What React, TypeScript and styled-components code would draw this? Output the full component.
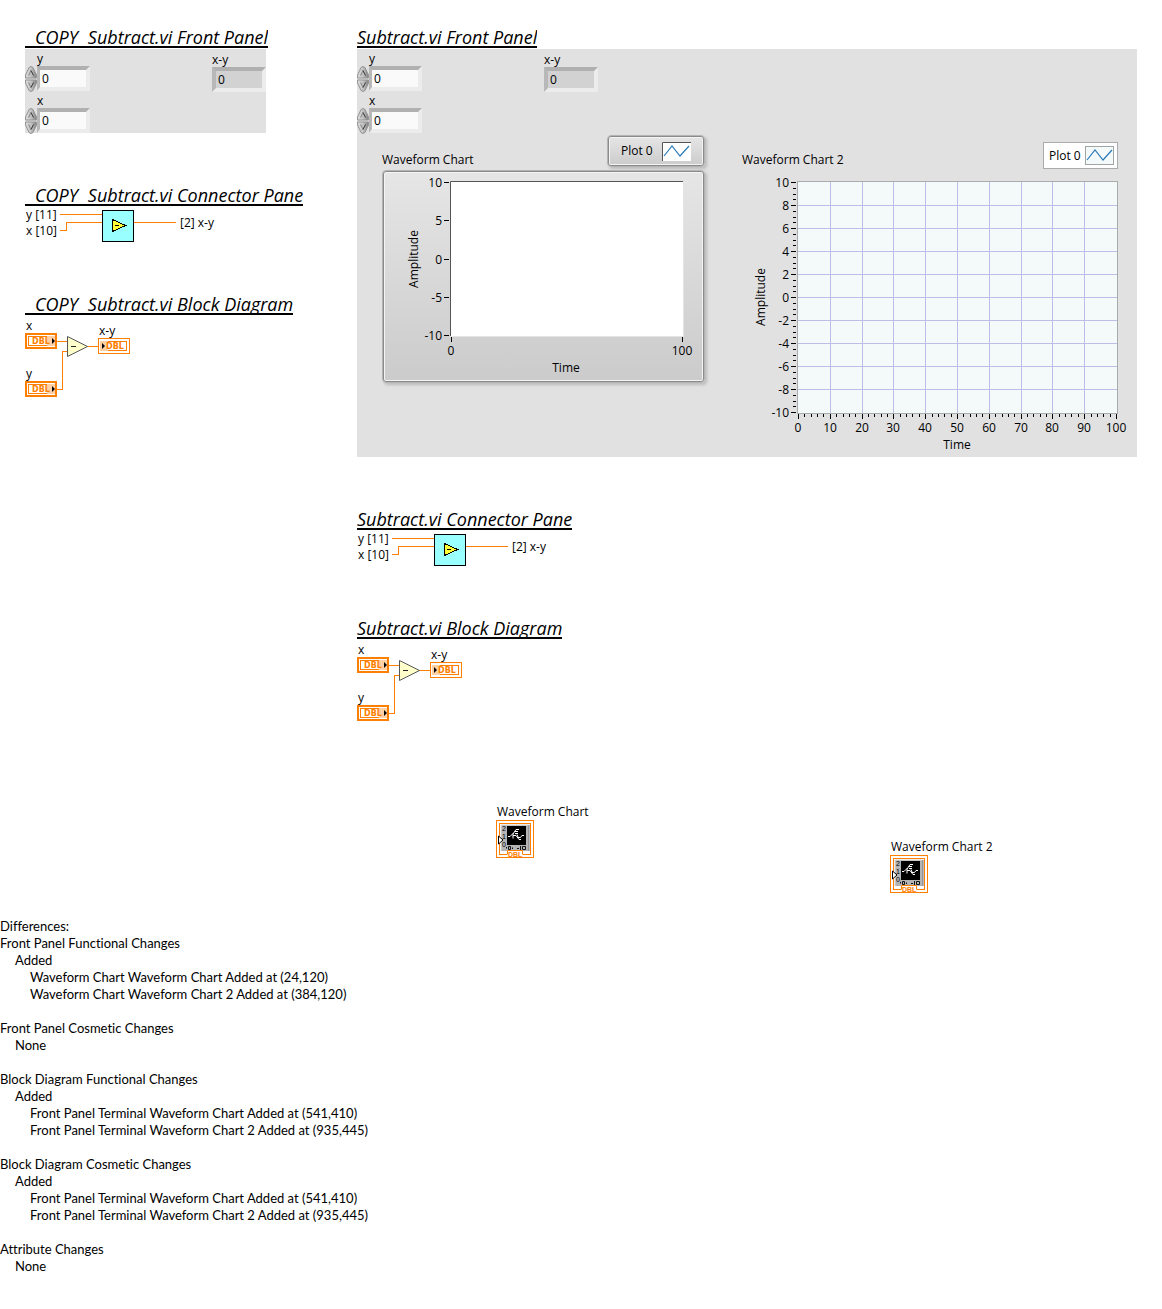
import React, { useId, useState } from "react";
import styled, { createGlobalStyle, css } from "styled-components";

const ORANGE = "#ff8000";
const UI_FONT = '"Open Sans", "Noto Sans", sans-serif';
const REPORT_FONT = 'Lato, "Open Sans", sans-serif';

const GlobalStyle = createGlobalStyle`
  *, *::before, *::after { box-sizing: border-box; }
  body {
    margin: 0;
    background: #fff;
    color: #000;
    font: 12px/16px ${UI_FONT};
  }
  svg { display: block; overflow: visible; }
  svg text { font-family: ${UI_FONT}; font-size: 12px; }
`;

const Page = styled.main`
  padding: 27px 0 34px;
`;

const Comparison = styled.div`
  display: grid;
  grid-template-columns: 332px minmax(780px, 1fr);
  padding: 0 25px;
`;

const Column = styled.div`
  display: flex;
  flex-direction: column;
  align-items: stretch;
  gap: 52px;
`;

const Section = styled.section`
  display: flex;
  flex-direction: column;
  align-items: flex-start;
`;

const Heading = styled.h2<{ $copy?: boolean }>`
  display: flex;
  gap: 10px;
  height: 21px;
  margin: 0 0 1px;
  padding-left: ${(p) => (p.$copy ? 10 : 0)}px;
  border-bottom: 2px solid #000;
  overflow: hidden;
  white-space: nowrap;
  font: italic 400 18px/21px ${UI_FONT};
`;

const FrontPanel = styled.div<{ $wide?: boolean }>`
  background: #e1e1e1;
  ${(p) => (p.$wide ? "align-self: stretch;" : "width: 241px;")}
`;

const Controls = styled.div`
  display: grid;
  grid-template-columns: 187px 54px;
`;

const Field = styled.div<{ $indicator?: boolean }>`
  padding-top: ${(p) => (p.$indicator ? 1 : 0)}px;
`;

const FieldLabel = styled.label<{ $inset?: boolean }>`
  display: block;
  height: 17px;
  padding-left: ${(p) => (p.$inset ? 12 : 0)}px;
  line-height: 20px;
`;

const FieldBody = styled.div`
  display: flex;
  height: 25px;
`;

const Spinner = styled.div`
  display: flex;
  flex-direction: column;
  width: 12px;
`;

const SpinButton = styled.button`
  width: 12px;
  height: 13px;
  padding: 0;
  border: 0;
  background: none;
`;

const NumberBox = styled.input<{ $indicator?: boolean }>`
  width: ${(p) => (p.$indicator ? 54 : 53)}px;
  height: 25px;
  padding: 0 2px;
  border: 4px solid;
  border-color: #b0b0b0 #ececec #ececec #b8b8b8;
  border-left-width: ${(p) => (p.$indicator ? 4 : 3)}px;
  border-radius: 0;
  outline: 0;
  background: ${(p) => (p.$indicator ? "#d2d2d2" : "#fafafa")};
  font: 12px/16px ${UI_FONT};
  color: #000;
`;

const Charts = styled.div`
  display: flex;
  gap: 37px;
  padding-left: 25px;
  height: 324px;
`;

const Chart = styled.figure<{ $width: number }>`
  width: ${(p) => p.$width}px;
  margin: 0;
`;

const ChartHeader = styled.figcaption<{ $inset?: boolean }>`
  display: flex;
  justify-content: space-between;
  align-items: flex-end;
  height: 37px;
  padding: 0 ${(p) => (p.$inset ? 10 : 0)}px 1px 0;
`;

const ChartTitle = styled.span`
  padding-bottom: 1px;
`;

const bevel = css`
  border: 1px solid #b4b4b4;
  border-radius: 4px;
  background: linear-gradient(#e6e6e6, #cbcbcb);
  box-shadow: inset 0 0 0 1px #8a8a8a, inset 0 0 0 2px #f4f4f4, 2px 2px 3px #bcbcbc;
`;

const Legend = styled.div<{ $classic?: boolean }>`
  display: flex;
  align-items: center;
  justify-content: space-between;
  ${(p) =>
    p.$classic
      ? css`
          width: 98px;
          height: 32px;
          margin-bottom: 2px;
          padding: 0 13px;
          ${bevel}
        `
      : css`
          width: 75px;
          height: 27px;
          padding: 0 3px 0 5px;
          border: 1px solid #a8acac;
          background: #fff;
        `}
`;

const Bezel = styled.div`
  height: 213px;
  padding: 1px;
  ${bevel}
`;

const Pane = styled.div`
  display: flex;
  align-items: flex-start;
  gap: 3px;
  height: 35px;
`;

const PaneInputs = styled.div`
  width: 32px;
  padding-left: 1px;
  white-space: nowrap;
`;

const PaneOutput = styled.div`
  padding: 8px 0 0 1px;
`;

const Canvas = styled.div<{ $tall?: boolean }>`
  position: relative;
  align-self: stretch;
  height: ${(p) => (p.$tall ? 278 : 84)}px;
`;

const Terminal = styled.div<{ $x: number; $y: number }>`
  position: absolute;
  left: ${(p) => p.$x}px;
  top: ${(p) => p.$y}px;
  white-space: nowrap;
`;

const TerminalName = styled.div`
  padding-left: 1px;
`;

const Report = styled.section`
  font: 13px/17px ${REPORT_FONT};
  font-variant-ligatures: none;
`;

const ReportLine = styled.p<{ $level?: number }>`
  margin: 0;
  padding-left: ${(p) => (p.$level ?? 0) * 15}px;
`;

const ReportGroup = styled.div`
  & + & {
    margin-top: 17px;
  }
`;

const DblText = styled.text`
  && {
    font: 800 8px "DejaVu Sans", sans-serif;
    fill: ${ORANGE};
  }
`;

const SmallDblText = styled.text`
  && {
    font: 700 7px "Liberation Sans", sans-serif;
    fill: ${ORANGE};
  }
`;

const DialText = styled.text`
  && {
    font: 400 7px "Liberation Sans", sans-serif;
    fill: #000;
  }
`;

function SpinIcon({ down }: { down?: boolean }) {
  const fill = useId();
  return (
    <svg width="12" height="13" viewBox="0 0 12 13">
      <defs>
        <linearGradient id={fill}>
          <stop offset="0" stopColor="#dcdcdc" />
          <stop offset="0.5" stopColor="#c4c4c4" />
          <stop offset="1" stopColor="#808080" />
        </linearGradient>
      </defs>
      <g transform={down ? "matrix(1 0 0 -1 0 13)" : undefined}>
        <path d="M0.5 12V9L4 1.5Q6 -0.5 8 1.5L11.5 9V12Z" fill={`url(#${fill})`} stroke="#959595" />
        <path d="M3.5 9.5L6 4.5L8.5 9.5" fill="#bdbdbd" stroke="#8a8a8a" />
        <path d="M6 4.5L8.5 9.5" stroke="#444" />
      </g>
    </svg>
  );
}

function NumericControl({ name }: { name: string }) {
  const id = useId();
  const [value, setValue] = useState("0");
  const step = (by: number) => setValue(String((Number(value) || 0) + by));
  return (
    <Field>
      <FieldLabel htmlFor={id} $inset>
        {name}
      </FieldLabel>
      <FieldBody>
        <Spinner>
          <SpinButton type="button" aria-label={`Increase ${name}`} onClick={() => step(1)}>
            <SpinIcon />
          </SpinButton>
          <SpinButton type="button" aria-label={`Decrease ${name}`} onClick={() => step(-1)}>
            <SpinIcon down />
          </SpinButton>
        </Spinner>
        <NumberBox id={id} value={value} onChange={(e) => setValue(e.target.value)} />
      </FieldBody>
    </Field>
  );
}

function NumericIndicator({ name }: { name: string }) {
  const id = useId();
  return (
    <Field $indicator>
      <FieldLabel htmlFor={id}>{name}</FieldLabel>
      <NumberBox id={id} value="0" readOnly $indicator />
    </Field>
  );
}

function PanelControls() {
  return (
    <Controls>
      <div>
        <NumericControl name="y" />
        <NumericControl name="x" />
      </div>
      <NumericIndicator name="x-y" />
    </Controls>
  );
}

function PlotSample({ classic }: { classic?: boolean }) {
  return (
    <svg width="29" height="19" viewBox="0 0 29 19">
      <rect
        x="0.5"
        y="0.5"
        width="28"
        height="18"
        fill={classic ? "#fff" : "#f4f9fa"}
        stroke={classic ? "#fff" : "#a0a4a4"}
      />
      {classic && <path d="M0.5 19V0.5H29" fill="none" stroke="#555" />}
      <path d="M2 14L10 4L18 14L27 4" fill="none" stroke="#2a7ab8" strokeWidth="1.2" />
    </svg>
  );
}

interface AxesProps {
  left: number;
  top: number;
  width: number;
  height: number;
  yTicks: number[];
  xTicks: number[];
  yMinor?: number;
  xMinor?: number;
}

/* Tick marks and scale numbers around the plot rectangle. */
function Axes({ left, top, width, height, yTicks, xTicks, yMinor = 0, xMinor = 0 }: AxesProps) {
  const yAt = (i: number) => top + 1 + Math.round((i * (height - 2)) / (yTicks.length - 1));
  const xAt = (i: number) => left + 1 + Math.round((i * (width - 3)) / (xTicks.length - 1));
  const yMinors = Array.from({ length: (yTicks.length - 1) * (yMinor + 1) }, (_, i) => i / (yMinor + 1));
  const xMinors = Array.from({ length: (xTicks.length - 1) * (xMinor + 1) }, (_, i) => i / (xMinor + 1));
  return (
    <g>
      {yMinor > 0 && yMinors.map((i) => <rect key={i} x={left - 4} y={yAt(i)} width="3" height="1" />)}
      {xMinor > 0 && xMinors.map((i) => <rect key={i} x={xAt(i)} y={top + height + 1} width="1" height="3" />)}
      {yTicks.map((t, i) => (
        <g key={t}>
          <rect x={left - 6} y={yAt(i)} width="5" height="1" />
          <text x={left - 8} y={yAt(i) + 5} textAnchor="end">
            {t}
          </text>
        </g>
      ))}
      {xTicks.map((t, i) => (
        <g key={t}>
          <rect x={xAt(i)} y={top + height + 1} width="1" height="5" />
          <text x={xAt(i)} y={top + height + 19} textAnchor="middle">
            {t}
          </text>
        </g>
      ))}
    </g>
  );
}

function ClassicPlot() {
  return (
    <svg width="319" height="209" viewBox="0 0 319 209" role="img" aria-label="Waveform Chart">
      <rect x="66" y="9" width="234" height="156" fill="#e4e4e4" />
      <rect x="66" y="9" width="233" height="155" fill="#fff" />
      <path d="M66.5 164V9.5H299" fill="none" stroke="#555" />
      <Axes left={66} top={9} width={234} height={155} yTicks={[10, 5, 0, -5, -10]} xTicks={[0, 100]} />
      <text x="182" y="200" textAnchor="middle">
        Time
      </text>
      <text transform="translate(34 87) rotate(-90)" textAnchor="middle">
        Amplitude
      </text>
    </svg>
  );
}

function GridPlot() {
  const rows = Array.from({ length: 9 }, (_, i) => 35 + i * 23);
  const cols = Array.from({ length: 9 }, (_, i) => 56 + Math.round((i + 1) * 31.8));
  return (
    <svg width="386" height="287" viewBox="0 0 386 287" role="img" aria-label="Waveform Chart 2">
      <rect x="55.5" y="11.5" width="320" height="232" fill="#f4f9fa" stroke="#a8acac" />
      {rows.map((y) => (
        <rect key={y} x="56" y={y} width="319" height="1" fill="#bdbde8" />
      ))}
      {cols.map((x) => (
        <rect key={x} x={x} y="12" width="1" height="231" fill="#bdbde8" />
      ))}
      <Axes
        left={55}
        top={11}
        width={321}
        height={232}
        yTicks={[10, 8, 6, 4, 2, 0, -2, -4, -6, -8, -10]}
        xTicks={[0, 10, 20, 30, 40, 50, 60, 70, 80, 90, 100]}
        yMinor={3}
        xMinor={4}
      />
      <text x="215" y="279" textAnchor="middle">
        Time
      </text>
      <text transform="translate(23 127) rotate(-90)" textAnchor="middle">
        Amplitude
      </text>
    </svg>
  );
}

function ConnectorPane() {
  return (
    <Pane>
      <PaneInputs>
        <div>y [11]</div>
        <div>x [10]</div>
      </PaneInputs>
      <svg width="116" height="35" viewBox="0 0 116 35" shapeRendering="crispEdges">
        <path d="M0 7.5H42M0 23.5H6.5V15.5H42M74 15.5H116" fill="none" stroke={ORANGE} />
        <rect x="42.5" y="3.5" width="31" height="31" fill="#99ffff" stroke="#000" />
        <path d="M52.5 12.5V24.5L65.5 18.5Z" fill="#ffff33" stroke="#000" />
        <path d="M55 18.5H59" stroke="#000" />
      </svg>
      <PaneOutput>[2] x-y</PaneOutput>
    </Pane>
  );
}

function DblControl({ y }: { y: number }) {
  return (
    <g transform={`translate(0 ${y})`}>
      <rect x="1" y="1" width="30" height="14" fill="#fff" stroke={ORANGE} strokeWidth="2" />
      <rect x="3.5" y="3.5" width="25" height="9" fill="#fff" stroke={ORANGE} />
      <rect x="22" y="3" width="8" height="10" fill="#ffd0a4" />
      <DblText x="7" y="11">
        DBL
      </DblText>
      <path d="M27 5V11L30 8Z" fill="#000" />
    </g>
  );
}

function SubtractDiagram() {
  return (
    <svg width="106" height="84" viewBox="0 0 106 84">
      <path
        d="M32 25.5H42M32 73.5H37.5V35.5H42M62 30.5H73"
        fill="none"
        stroke={ORANGE}
        shapeRendering="crispEdges"
      />
      <text x="1" y="14">
        x
      </text>
      <DblControl y={17} />
      <text x="1" y="62">
        y
      </text>
      <DblControl y={65} />
      <path d="M42.5 20.5V40.5L62.5 30.5Z" fill="#ffffcc" stroke="#555" />
      <path d="M46 30.5H51" stroke="#222" />
      <text x="74" y="19">
        x-y
      </text>
      <g transform="translate(73 22)">
        <rect x="0.5" y="0.5" width="31" height="15" fill="#fff" stroke={ORANGE} />
        <rect x="3.5" y="3.5" width="25" height="9" fill="#fff" stroke={ORANGE} />
        <rect x="2" y="3" width="8" height="10" fill="#ffd0a4" />
        <DblText x="8" y="11">
          DBL
        </DblText>
        <path d="M4 5V11L7 8Z" fill="#000" />
      </g>
    </svg>
  );
}

function ChartTerminal({ name, x, y }: { name: string; x: number; y: number }) {
  return (
    <Terminal $x={x} $y={y}>
      <TerminalName>{name}</TerminalName>
      <svg width="38" height="38" viewBox="0 0 38 38" aria-hidden="true">
        <rect x="0.5" y="0.5" width="37" height="37" fill="#fff" stroke={ORANGE} />
        <rect x="3.5" y="3.5" width="31" height="31" fill="#fff" stroke={ORANGE} />
        <rect x="5" y="5" width="28" height="26" fill="#b4b4b4" />
        <path d="M5 31V5H33" fill="none" stroke="#d8d8d8" />
        <path d="M33 5V31" fill="none" stroke="#777" />
        <rect x="11" y="6" width="19" height="19" fill="#000" />
        <path
          d="M12 16.5H14L17 13.5V18.5M17 14L20 9.5H23M19 11.5H22M19 13.5H22M17 15.5H20L23 19.5H25M22 17.5H24.5L26 15.5H28M21 14.5L22 17"
          fill="none"
          stroke="#fff"
        />
        <DialText x="6" y="11">
          2
        </DialText>
        <DialText x="6" y="19">
          1
        </DialText>
        <DialText x="6" y="27">
          0
        </DialText>
        <path
          d="M10.5 27V28.5M12.5 26.5H14.5V29.5H12.5ZM16.5 27.5V29M21 28.5H23M24.5 26V30M26.5 26.5H29.5V29.5H26.5Z"
          fill="none"
          stroke="#111"
        />
        <rect x="11" y="30" width="16" height="7" fill="#fff" />
        <path d="M11.5 34.5V30.5H26.5V34.5" fill="none" stroke={ORANGE} />
        <SmallDblText x="12" y="37">
          DBL
        </SmallDblText>
        <path d="M2.5 16V24L7 20Z" fill="#fff" stroke="#000" />
      </svg>
    </Terminal>
  );
}

function Title({ copy, children }: { copy?: boolean; children: string }) {
  return (
    <Heading $copy={copy}>
      {copy && <span>COPY</span>}
      <span>{children}</span>
    </Heading>
  );
}

interface Change {
  title: string;
  added?: string[];
}

const terminalsAdded = [
  "Front Panel Terminal Waveform Chart Added at (541,410)",
  "Front Panel Terminal Waveform Chart 2 Added at (935,445)",
];

const changes: Change[] = [
  {
    title: "Front Panel Functional Changes",
    added: [
      "Waveform Chart Waveform Chart Added at (24,120)",
      "Waveform Chart Waveform Chart 2 Added at (384,120)",
    ],
  },
  { title: "Front Panel Cosmetic Changes" },
  { title: "Block Diagram Functional Changes", added: terminalsAdded },
  { title: "Block Diagram Cosmetic Changes", added: terminalsAdded },
  { title: "Attribute Changes" },
];

export default function App() {
  return (
    <>
      <GlobalStyle />
      <Page>
        <Comparison>
          <Column>
            <Section>
              <Title copy>Subtract.vi Front Panel</Title>
              <FrontPanel>
                <PanelControls />
              </FrontPanel>
            </Section>
            <Section>
              <Title copy>Subtract.vi Connector Pane</Title>
              <ConnectorPane />
            </Section>
            <Section>
              <Title copy>Subtract.vi Block Diagram</Title>
              <Canvas>
                <SubtractDiagram />
              </Canvas>
            </Section>
          </Column>
          <Column>
            <Section>
              <Title>Subtract.vi Front Panel</Title>
              <FrontPanel $wide>
                <PanelControls />
                <Charts>
                  <Chart $width={323}>
                    <ChartHeader>
                      <ChartTitle>Waveform Chart</ChartTitle>
                      <Legend $classic>
                        Plot 0 <PlotSample classic />
                      </Legend>
                    </ChartHeader>
                    <Bezel>
                      <ClassicPlot />
                    </Bezel>
                  </Chart>
                  <Chart $width={386}>
                    <ChartHeader $inset>
                      <ChartTitle>Waveform Chart 2</ChartTitle>
                      <Legend>
                        Plot 0 <PlotSample />
                      </Legend>
                    </ChartHeader>
                    <GridPlot />
                  </Chart>
                </Charts>
              </FrontPanel>
            </Section>
            <Section>
              <Title>Subtract.vi Connector Pane</Title>
              <ConnectorPane />
            </Section>
            <Section>
              <Title>Subtract.vi Block Diagram</Title>
              <Canvas $tall>
                <SubtractDiagram />
                <ChartTerminal name="Waveform Chart" x={139} y={164} />
                <ChartTerminal name="Waveform Chart 2" x={533} y={199} />
              </Canvas>
            </Section>
          </Column>
        </Comparison>
        <Report>
          <ReportLine>Differences:</ReportLine>
          {changes.map((change) => (
            <ReportGroup key={change.title}>
              <ReportLine>{change.title}</ReportLine>
              <ReportLine $level={1}>{change.added ? "Added" : "None"}</ReportLine>
              {change.added?.map((item) => (
                <ReportLine key={item} $level={2}>
                  {item}
                </ReportLine>
              ))}
            </ReportGroup>
          ))}
        </Report>
      </Page>
    </>
  );
}
